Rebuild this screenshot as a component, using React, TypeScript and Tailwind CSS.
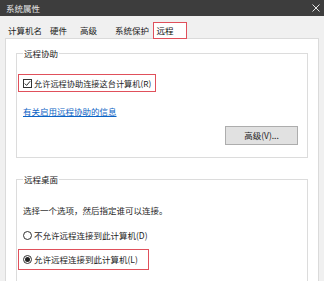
import React from "react";

const font = { fontFamily: '"Noto Sans CJK SC", "Noto Sans", sans-serif' };

const tabs = [
    { id: "name", label: "计算机名", cls: "ml-[8px]" },
    { id: "hw", label: "硬件", cls: "ml-[8px]" },
    { id: "adv", label: "高级", cls: "ml-[13px]" },
    { id: "prot", label: "系统保护", cls: "ml-[18px]" },
] as const;

/* ── small Win10 controls ── */

const CheckBox: React.FC = () => (
    <span className="w-[9px] h-[9px] border border-[#333] bg-white flex items-center justify-center shrink-0">
        <svg width="7" height="7" viewBox="0 0 7 7" fill="none" stroke="#222" strokeWidth="1">
            <path d="M0.8 3.6l1.8 1.8 3.6-4.2" />
        </svg>
    </span>
);

const Radio: React.FC<{ checked?: boolean }> = ({ checked }) => (
    <span className="w-[9px] h-[9px] rounded-full border border-[#333] bg-white flex items-center justify-center shrink-0">
        {checked && <span className="w-[5px] h-[5px] rounded-full bg-[#222]" />}
    </span>
);

const GroupBox: React.FC<{ title: string; className?: string; children: React.ReactNode }> = ({ title, className, children }) => (
    <div className={`relative ml-[10px] w-[292px] border border-[#dcdcdc] ${className ?? ""}`}>
        <span className="absolute -top-[7px] left-[6px] bg-white px-[1px] leading-[12px] text-[#222]">{title}</span>
        {children}
    </div>
);

export default function App() {
    return (
        <div className="w-[324px] h-[281px] bg-[#f0f0f0] overflow-hidden flex flex-col text-[8.5px] text-[#1e1e1e] whitespace-nowrap" style={font}>
            {/* title bar */}
            <div className="h-[16px] bg-[#3d3d3d] flex items-center justify-between pl-[6px] pr-[4px] shrink-0">
                <span className="text-[#e6e6e6] leading-none">系统属性</span>
                <svg width="8" height="8" viewBox="0 0 8 8" stroke="#e6e6e6" strokeWidth="1">
                    <path d="M0.5 0.5l7 7M7.5 0.5l-7 7" />
                </svg>
            </div>

            {/* tabs */}
            <div className="h-[22px] flex items-end shrink-0">
                {tabs.map((t) => (
                    <span key={t.id} className={`${t.cls} h-[15px] flex items-center leading-none text-[#222]`}>
                        {t.label}
                    </span>
                ))}
                <span className="ml-[4px] w-[34px] h-[17px] -mb-[1px] relative z-10 bg-white border-[1.5px] border-[#e0505b] flex items-center pl-[2.5px] leading-none text-[#111]">
                    远程
                </span>
            </div>

            {/* panel */}
            <div className="ml-[5px] w-[314px] flex-1 bg-white border border-[#dadada] border-b-0 flex flex-col">
                <GroupBox title="远程协助" className="mt-[14px] h-[105px] flex flex-col">
                    <div className="ml-[1px] mt-[20px] w-[138px] h-[18px] border-[1.5px] border-[#e0505b] flex items-center pl-[4px] gap-[2px]">
                        <CheckBox />
                        <span className="leading-none text-[8.2px]">允许远程协助连接这台计算机(R)</span>
                    </div>
                    <span className="ml-[6px] mt-[15px] leading-none text-[#0b63c5] underline underline-offset-1">
                        有关启用远程协助的信息
                    </span>
                    <div className="self-end mr-[9px] mt-[10px] w-[73px] h-[19px] bg-[#e1e1e1] border border-[#adadad] flex items-center justify-center leading-none">
                        高级(V)...
                    </div>
                </GroupBox>

                <GroupBox title="远程桌面" className="mt-[21px] flex-1 border-b-0 flex flex-col">
                    <span className="ml-[6px] mt-[26px] leading-none">选择一个选项，然后指定谁可以连接。</span>
                    <div className="ml-[6px] mt-[16px] flex items-center gap-[2px]">
                        <Radio />
                        <span className="leading-none">不允许远程连接到此计算机(D)</span>
                    </div>
                    <div className="ml-[1px] mt-[9px] w-[131px] h-[21px] border-[1.5px] border-[#e0505b] flex items-center pl-[4px] gap-[2px]">
                        <Radio checked />
                        <span className="leading-none">允许远程连接到此计算机(L)</span>
                    </div>
                </GroupBox>
            </div>
        </div>
    );
}
